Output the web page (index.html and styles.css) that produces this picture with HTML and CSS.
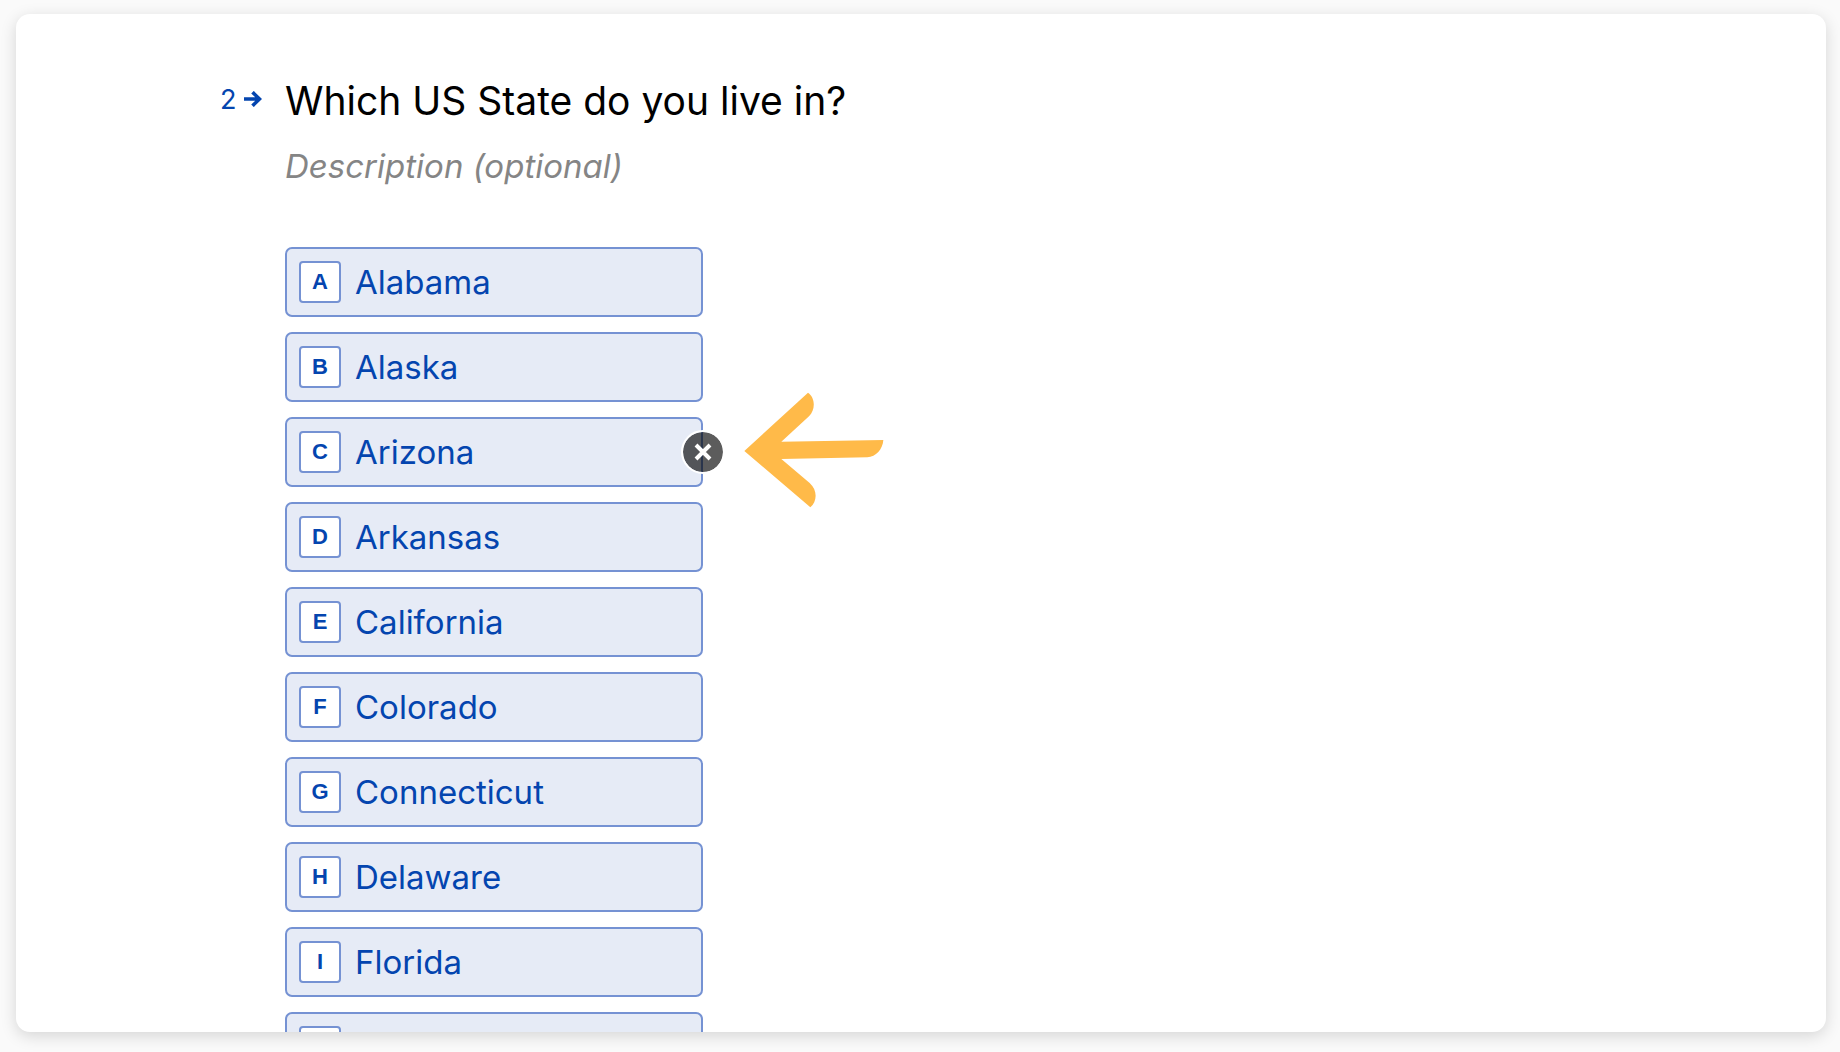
FILE: index.html
```
<!DOCTYPE html>
<html lang="en">
<head>
    <meta charset="UTF-8">
    <meta name="viewport" content="width=device-width, initial-scale=1.0">
    <title>Which US State do you live in?</title>
    <link rel="stylesheet" href="styles.css">
</head>
<body>
    <main class="card">
        <section class="question">
            <div class="question-number">
                <span>2</span>
                <svg class="number-arrow" viewBox="0 0 18 16" fill="none" stroke="currentColor" stroke-width="3.6">
                    <path d="M0 8h15M8.5 1.2L15.5 8l-7 6.8"></path>
                </svg>
            </div>
            <div class="question-body">
                <h1 class="question-title">Which US State do you live in?</h1>
                <input class="question-description" type="text" placeholder="Description (optional)" aria-label="Description">

                <ul class="options">
                    <li class="option-item">
                        <button class="option" type="button"><span class="option-key">A</span>Alabama</button>
                    </li>
                    <li class="option-item">
                        <button class="option" type="button"><span class="option-key">B</span>Alaska</button>
                    </li>
                    <li class="option-item">
                        <button class="option" type="button"><span class="option-key">C</span>Arizona</button>
                        <button class="remove-btn" type="button" aria-label="Remove">
                            <svg class="remove-icon" viewBox="0 0 18 18" fill="none" stroke="currentColor" stroke-width="4">
                                <path d="M2 2l14 14M16 2L2 16"></path>
                            </svg>
                        </button>
                        <svg class="pointer" viewBox="252 66 420 348" fill="#ffba49">
                            <path d="M253 243L444 68C465 82 468 118 447 139L364 215L670 210C668 238 648 260 622 262L364 267L449 339C474 361 471 396 451 412Z"></path>
                        </svg>
                    </li>
                    <li class="option-item">
                        <button class="option" type="button"><span class="option-key">D</span>Arkansas</button>
                    </li>
                    <li class="option-item">
                        <button class="option" type="button"><span class="option-key">E</span>California</button>
                    </li>
                    <li class="option-item">
                        <button class="option" type="button"><span class="option-key">F</span>Colorado</button>
                    </li>
                    <li class="option-item">
                        <button class="option" type="button"><span class="option-key">G</span>Connecticut</button>
                    </li>
                    <li class="option-item">
                        <button class="option" type="button"><span class="option-key">H</span>Delaware</button>
                    </li>
                    <li class="option-item">
                        <button class="option" type="button"><span class="option-key">I</span>Florida</button>
                    </li>
                    <li class="option-item">
                        <button class="option" type="button"><span class="option-key"></span></button>
                    </li>
                </ul>
            </div>
        </section>
    </main>
</body>
</html>
```
FILE: styles.css
```
* {
    margin: 0;
    padding: 0;
    box-sizing: border-box;
}

body {
    font-family: Inter, 'Liberation Sans', sans-serif;
    background-color: #fafafa;
    height: 100vh;
    padding: 14px 14px 20px 16px;
}

.card {
    height: 100%;
    background-color: white;
    border-radius: 14px;
    box-shadow: 0 4px 16px rgba(0, 0, 0, 0.15);
    overflow: hidden;
}

.question {
    display: flex;
    padding: 60px 200px 0;
}

.question-number {
    display: flex;
    align-items: center;
    gap: 8px;
    width: 69px;
    height: 50px;
    padding-left: 4px;
    font-size: 27px;
    color: #0445af;
}

.number-arrow {
    width: 18px;
    height: 16px;
}

.question-body {
    flex: 1;
}

.question-title {
    font-size: 39px;
    font-weight: 400;
    line-height: 54px;
    color: black;
}

.question-description {
    display: block;
    width: 100%;
    height: 44px;
    margin-top: 16px;
    border: none;
    outline: none;
    background: none;
    font-family: inherit;
    font-size: 33px;
    font-style: italic;
}

.question-description::placeholder {
    color: #858585;
}

.options {
    display: flex;
    flex-direction: column;
    gap: 15px;
    width: 418px;
    margin-top: 59px;
    list-style: none;
}

.option-item {
    position: relative;
}

.option {
    display: flex;
    align-items: center;
    gap: 14px;
    width: 100%;
    height: 70px;
    padding: 0 12px;
    border: 2px solid #7592d3;
    border-radius: 7px;
    background-color: #e6ebf6;
    font-family: inherit;
    font-size: 33px;
    text-align: left;
    color: #0445af;
    cursor: pointer;
}

.option-key {
    display: flex;
    align-items: center;
    justify-content: center;
    width: 42px;
    height: 42px;
    border: 2px solid #7592d3;
    border-radius: 4px;
    background-color: white;
    font-family: 'Liberation Sans', Arial, sans-serif;
    font-size: 22px;
    font-weight: 700;
}

.remove-btn {
    position: absolute;
    top: 13px;
    right: -22px;
    display: flex;
    align-items: center;
    justify-content: center;
    width: 44px;
    height: 44px;
    border: 2px solid white;
    border-radius: 50%;
    background-color: rgba(0, 0, 0, 0.64);
    background-clip: padding-box;
    color: white;
    cursor: pointer;
}

.remove-icon {
    width: 18px;
    height: 18px;
}

.pointer {
    position: absolute;
    top: -25px;
    left: 100%;
    width: 140px;
    height: 116px;
    margin-left: 41px;
}
```
